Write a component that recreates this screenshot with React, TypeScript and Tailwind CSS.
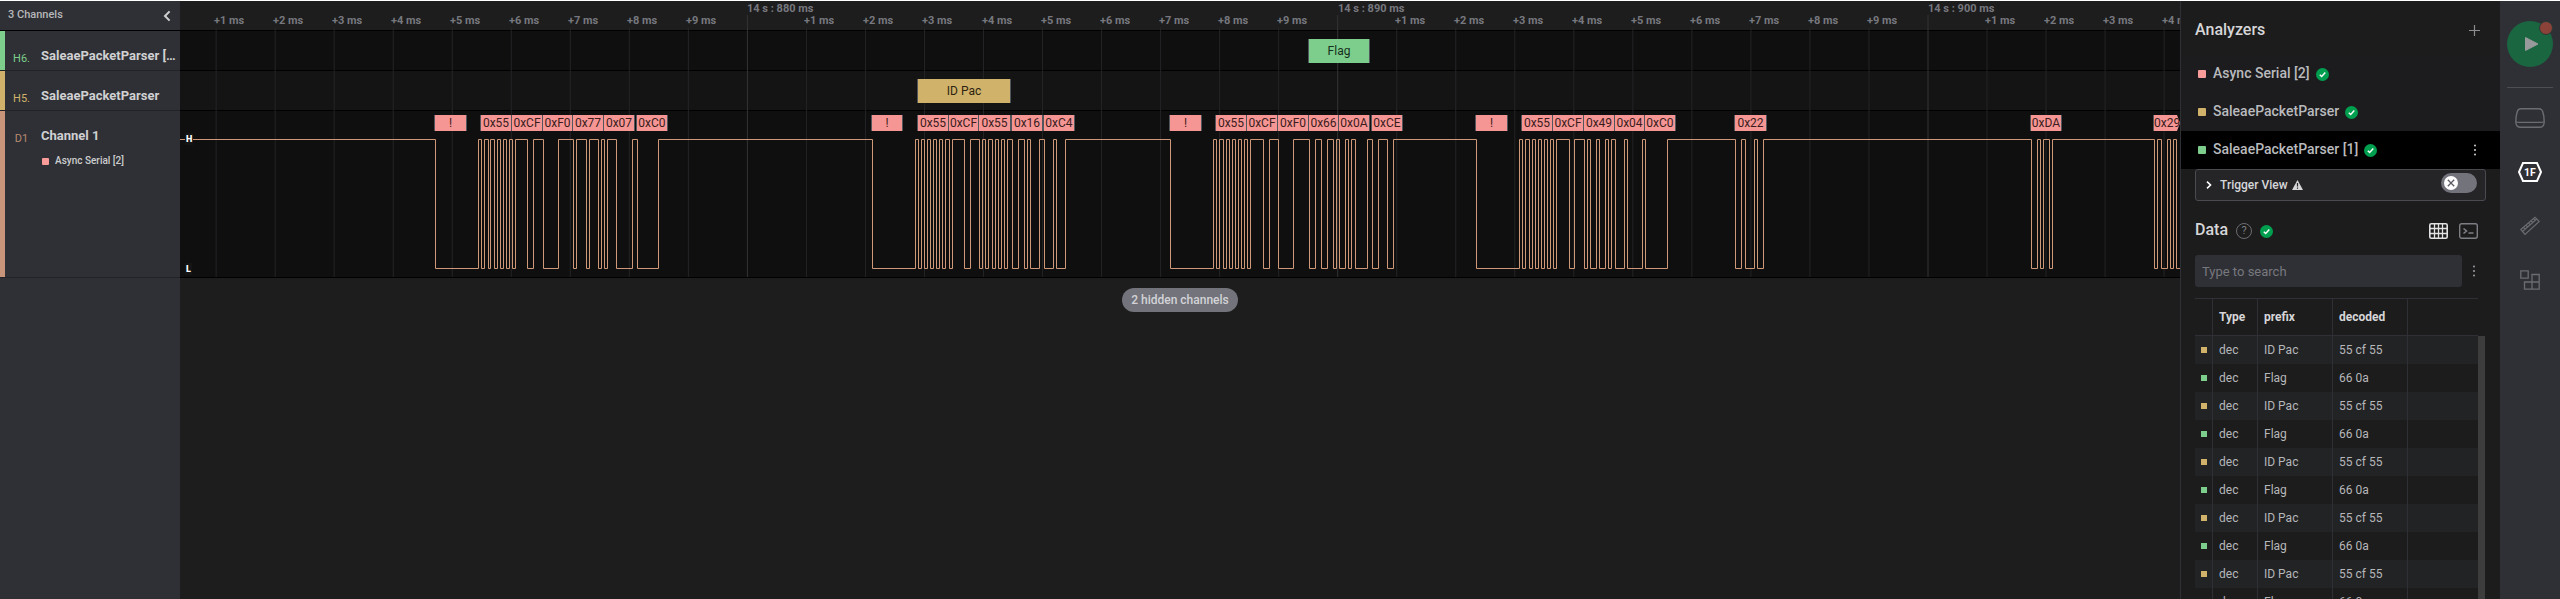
import React from "react";

const TICK_STEP = 59.03;
const TICK_ORIGIN = 567.4;
const TRACK_START = 180;
const HIGH_Y = 28.5;
const LOW_Y = 157.5;

type Bubble = { from: number; to: number; text: string };

const serialBubbles: Bubble[] = [
  { from: 434, to: 467, text: "!" },
  { from: 480, to: 512, text: "0x55" },
  { from: 511, to: 543, text: "0xCF" },
  { from: 542, to: 573, text: "0xF0" },
  { from: 572, to: 604, text: "0x77" },
  { from: 603, to: 635, text: "0x07" },
  { from: 636, to: 668, text: "0xC0" },
  { from: 871, to: 903, text: "!" },
  { from: 917, to: 949, text: "0x55" },
  { from: 948, to: 979, text: "0xCF" },
  { from: 978, to: 1011, text: "0x55" },
  { from: 1011, to: 1043, text: "0x16" },
  { from: 1043, to: 1075, text: "0xC4" },
  { from: 1169, to: 1202, text: "!" },
  { from: 1215, to: 1247, text: "0x55" },
  { from: 1246, to: 1278, text: "0xCF" },
  { from: 1277, to: 1309, text: "0xF0" },
  { from: 1308, to: 1339, text: "0x66" },
  { from: 1338, to: 1370, text: "0x0A" },
  { from: 1371, to: 1403, text: "0xCE" },
  { from: 1475, to: 1508, text: "!" },
  { from: 1521, to: 1553, text: "0x55" },
  { from: 1552, to: 1584, text: "0xCF" },
  { from: 1583, to: 1615, text: "0x49" },
  { from: 1614, to: 1645, text: "0x04" },
  { from: 1644, to: 1676, text: "0xC0" },
  { from: 1734, to: 1767, text: "0x22" },
  { from: 2030, to: 2062, text: "0xDA" },
];

// Times of every level change, starting with a fall from the idle-high level.
const edges = [
  435, 478, 481, 484, 488, 490, 494, 497, 500, 503, 506, 509, 512, 515, 527, 533, 543, 558, 573, 576,
  586, 589, 598, 601, 604, 607, 616, 632, 637, 658, 872, 915, 918, 921, 924, 927, 930, 933, 936, 939,
  942, 945, 949, 952, 964, 970, 979, 982, 985, 988, 992, 995, 998, 1001, 1004, 1007, 1012, 1018, 1024,
  1027, 1030, 1039, 1044, 1053, 1056, 1065, 1170, 1213, 1216, 1219, 1223, 1226, 1229, 1232, 1235, 1238,
  1241, 1244, 1247, 1250, 1263, 1269, 1278, 1293, 1309, 1315, 1321, 1327, 1333, 1336, 1339, 1345, 1348,
  1351, 1355, 1367, 1372, 1378, 1387, 1393, 1476, 1519, 1522, 1525, 1529, 1532, 1535, 1538, 1541, 1544,
  1547, 1550, 1553, 1556, 1569, 1574, 1584, 1587, 1590, 1596, 1599, 1605, 1608, 1611, 1615, 1624, 1627,
  1642, 1645, 1667, 1735, 1741, 1745, 1754, 1757, 1763, 2031, 2037, 2040, 2043, 2049, 2052, 2154, 2157,
  2161, 2167, 2170, 2173, 2176,
];

const tracePath =
  `M0 ${HIGH_Y}` +
  edges.map((x, i) => `H${x - TRACK_START + 0.5}V${i % 2 === 0 ? LOW_Y : HIGH_Y}`).join("") +
  "H2000";

const ticks = Array.from({ length: 34 }, (_, i) => {
  const n = i - 9;
  return {
    x: TICK_ORIGIN + n * TICK_STEP,
    major: n % 10 === 0,
    label: n % 10 === 0 ? `14 s : ${880 + n} ms` : `+${(n + 10) % 10} ms`,
  };
});

const swatches = {
  pink: "bg-[#f99b98]",
  gold: "bg-[#d0b26a]",
  green: "bg-[#7dcd8c]",
};

function CheckBadge() {
  return (
    <svg className="size-[13px] shrink-0" viewBox="0 0 13 13" aria-hidden="true">
      <circle cx="6.5" cy="6.5" r="6.5" fill="#009e4f" />
      <path d="M3.8 6.7 5.7 8.5 9.3 4.6" fill="none" stroke="#fff" strokeWidth="1.5" />
    </svg>
  );
}

function Kebab() {
  return (
    <svg className="h-3 w-1" viewBox="0 0 4 12" fill="currentColor" aria-hidden="true">
      <circle cx="2" cy="1.5" r="1" />
      <circle cx="2" cy="6" r="1" />
      <circle cx="2" cy="10.5" r="1" />
    </svg>
  );
}

function ChannelRow(props: {
  id: string;
  name: string;
  height: string;
  strip: string;
  idColor: string;
  children?: React.ReactNode;
}) {
  return (
    <li className={`flex border-b border-[#222327] ${props.height}`}>
      <div className={`w-[5px] shrink-0 ${props.strip}`} />
      <div className={`w-8 shrink-0 pt-5 pl-px text-center text-[11px] leading-4 ${props.idColor}`}>{props.id}</div>
      <div className="min-w-0 flex-1 pt-4 pr-1 pl-1">
        <div className="truncate text-[13px] leading-[18px] font-bold text-[#d0d0d2]">{props.name}</div>
        {props.children}
      </div>
    </li>
  );
}

function Channels() {
  return (
    <aside className="w-[180px] shrink-0 bg-[#2f3035]">
      <div className="flex h-[30px] items-center justify-between border-b border-black pr-[5px] pl-2">
        <h2 className="text-[11px] font-medium text-[#b6b7ba]">3 Channels</h2>
        <button type="button" aria-label="Collapse channels" className="flex size-4 items-center justify-center text-[#d0d0d2]">
          <svg className="h-3 w-2" viewBox="0 0 8 12" aria-hidden="true">
            <path d="M6.6 1.4 2 6l4.600 4.600" fill="none" stroke="currentColor" strokeWidth="2" />
          </svg>
        </button>
      </div>
      <ul>
        <ChannelRow id="H6." name="SaleaePacketParser [1]" height="h-10" strip="bg-[#7dcd8c]" idColor="text-[#7dcd8c]" />
        <ChannelRow id="H5." name="SaleaePacketParser" height="h-10" strip="bg-[#d0b26a]" idColor="text-[#d0b26a]" />
        <ChannelRow id="D1" name="Channel 1" height="h-[167px]" strip="bg-[#c8957a]" idColor="text-[#b98970]">
          <div className="flex items-center gap-1.5 pt-2 pl-px">
            <span className="size-[7px] rounded-[1px] bg-[#f99b98]" />
            <span className="text-[10px] leading-4 font-medium text-[#cdcdcf]">Async Serial [2]</span>
          </div>
        </ChannelRow>
      </ul>
    </aside>
  );
}

function BubbleBox({ bubble, tone }: { bubble: Bubble; tone: string }) {
  return (
    <div
      className={`absolute flex items-center justify-center border-x border-[#50565b] text-[12px] ${tone}`}
      style={{ left: bubble.from - TRACK_START, width: bubble.to - bubble.from }}
    >
      {bubble.text}
    </div>
  );
}

function Timeline() {
  return (
    <main className="relative min-w-0 flex-1 overflow-hidden bg-[#1d1d1d]">
      <div className="h-[30px] border-b border-black" />
      <div className="h-10 border-b border-black bg-[#0f0f0f]" />
      <div className="h-10 border-b border-black bg-[#141414]" />
      <div className="h-[167px] border-b border-black bg-[#0f0f0f]" />

      <svg className="absolute top-0 left-0 h-[276px] w-[2000px]" aria-hidden="true">
        {ticks.map((t) => (
          <line key={t.x} x1={t.x} x2={t.x} y1={t.major ? 14 : 26} y2="276" stroke={t.major ? "#343436" : "#242427"} />
        ))}
      </svg>
      {ticks.map((t) => (
        <span
          key={t.x}
          className={`absolute text-[11px] leading-3 font-bold whitespace-nowrap text-[#77787f] ${t.major ? "top-0.5" : "top-3.5 -ml-0.5"}`}
          style={{ left: Math.round(t.x) }}
        >
          {t.label}
        </span>
      ))}

      <div className="absolute inset-x-0 top-[38px] h-6">
        <BubbleBox bubble={{ from: 1308, to: 1370, text: "Flag" }} tone="h-6 bg-[#7dcd8c] text-[#15301b]" />
      </div>
      <div className="absolute inset-x-0 top-[78px] h-6">
        <BubbleBox bubble={{ from: 917, to: 1011, text: "ID Pac" }} tone="h-6 bg-[#d0b26a] text-[#2c2410]" />
      </div>
      <div className="absolute inset-x-0 top-[114px] h-4">
        {serialBubbles.map((b) => (
          <BubbleBox key={b.from} bubble={b} tone="h-4 bg-[#f69694] text-[#3a1c1c]" />
        ))}
        <div className="absolute left-[1973px] h-4 w-[27px] overflow-hidden border-l border-[#50565b] bg-[#f69694] text-[12px] leading-4 text-[#3a1c1c] [clip-path:polygon(0_0,24px_0,100%_50%,24px_100%,0_100%)]">
          0x29
        </div>
      </div>

      <svg className="absolute top-[110px] left-0 h-[166px] w-[2000px]" aria-hidden="true">
        <path d={tracePath} fill="none" stroke="#cf9879" />
      </svg>
      <span className="absolute top-[132px] left-[5px] bg-[#151515] px-px text-[9px] leading-3 font-black text-white">H</span>
      <span className="absolute top-[262px] left-[5px] bg-[#151515] px-px text-[9px] leading-3 font-black text-white">L</span>

      <div className="flex justify-center pt-2.5">
        <button type="button" className="h-6 rounded-full bg-[#72737b] px-[9px] text-[12px] font-medium text-[#d3d3d7]">
          2 hidden channels
        </button>
      </div>
    </main>
  );
}

const analyzers = [
  { name: "Async Serial [2]", tone: swatches.pink, active: false },
  { name: "SaleaePacketParser", tone: swatches.gold, active: false },
  { name: "SaleaePacketParser [1]", tone: swatches.green, active: true },
];

const rows = Array.from({ length: 10 }, (_, i) =>
  i % 2 === 0
    ? { tone: swatches.gold, type: "dec", prefix: "ID Pac", decoded: "55 cf 55" }
    : { tone: swatches.green, type: "dec", prefix: "Flag", decoded: "66 0a" },
);

function DataTable() {
  return (
    <div className="mt-[11px] ml-3.5 flex w-[291px]">
      <table className="w-[283px] table-fixed border-separate border-spacing-0 text-left text-[12px]">
        <colgroup>
          <col className="w-[18px]" />
          <col className="w-[45px]" />
          <col className="w-[75px]" />
          <col className="w-[75px]" />
          <col />
        </colgroup>
        <thead>
          <tr className="h-[38px] text-[#d6d6d8]">
            <th className="border-y border-r border-[#2f3035] p-0" aria-label="Color" />
            <th className="border-y border-r border-[#2f3035] p-0 pl-1.5 font-bold">Type</th>
            <th className="border-y border-r border-[#2f3035] p-0 pl-1.5 font-bold">prefix</th>
            <th className="border-y border-r border-[#2f3035] p-0 pl-1.5 font-bold">decoded</th>
            <th className="border-y border-[#2f3035] p-0" aria-label="Extra" />
          </tr>
        </thead>
        <tbody>
          {rows.map((r, i) => (
            <tr key={i} className="h-7 text-[#b6b7ba] odd:bg-[#222325]">
              <td className="border-r border-[#2f3035] p-0">
                <span className={`ml-1.5 block size-1.5 ${r.tone}`} />
              </td>
              <td className="border-r border-[#2f3035] p-0 pl-1.5">{r.type}</td>
              <td className="border-r border-[#2f3035] p-0 pl-1.5">{r.prefix}</td>
              <td className="border-r border-[#2f3035] p-0 pl-1.5">{r.decoded}</td>
              <td className="p-0" />
            </tr>
          ))}
        </tbody>
      </table>
      <div className="mt-[38px] w-[7px] bg-[#3d3d3d]" />
    </div>
  );
}

function AnalyzerPanel() {
  return (
    <section className="flex w-80 shrink-0 flex-col overflow-hidden border-l border-[#2f3035] bg-[#1c1c1c]">
      <header className="flex h-[54px] shrink-0 items-center justify-between pt-1 pr-5 pl-3.5">
        <h2 className="text-[16px] font-medium text-[#d6d6d8]">Analyzers</h2>
        <button type="button" aria-label="Add analyzer" className="text-[#8c8c91]">
          <svg className="size-[11px]" viewBox="0 0 11 11" aria-hidden="true">
            <path d="M5.500 0V11M0 5.500H11" stroke="currentColor" strokeWidth="1.200" />
          </svg>
        </button>
      </header>
      <ul className="shrink-0 bg-[#1c1c1e]">
        {analyzers.map((a) => (
          <li key={a.name} className={`flex h-[38px] items-center pr-[23px] pl-[17px] ${a.active ? "bg-black" : ""}`}>
            <span className={`mr-[7px] size-2 rounded-[1px] ${a.tone}`} />
            <button type="button" className="mr-1.5 pb-0.5 text-[14px] leading-5 font-medium text-[#b9babd]">
              {a.name}
            </button>
            <CheckBadge />
            {a.active && (
              <button type="button" aria-label="Analyzer options" className="ml-auto text-[#d0d0d2]">
                <Kebab />
              </button>
            )}
          </li>
        ))}
      </ul>
      <div className="mr-3.5 ml-3.5 flex h-8 shrink-0 items-center rounded-[3px] border border-[#4a4b50] bg-[#252528] pr-2 pl-2.5">
        <button type="button" className="flex items-center text-[12px] font-medium text-[#d6d6d8]">
          <svg className="mr-2 h-2 w-1.5" viewBox="0 0 6 8" aria-hidden="true">
            <path d="M1 .7 4.500 4 1 7.300" fill="none" stroke="#fff" strokeWidth="1.600" />
          </svg>
          Trigger View
          <svg className="ml-1 h-[10px] w-[11px]" viewBox="0 0 11 10" aria-hidden="true">
            <path d="M5.500 0 11 10H0Z" fill="#d6d6d8" />
            <path d="M5.500 3V6.500M5.500 7.400V8.700" stroke="#252528" strokeWidth="1.200" />
          </svg>
        </button>
        <label className="relative mb-1 ml-auto flex h-5 w-9 items-center rounded-full bg-[#72737b] pl-[3px]">
          <input type="checkbox" role="switch" aria-label="Trigger View" className="absolute inset-0 opacity-0" />
          <svg className="size-3.5" viewBox="0 0 14 14" aria-hidden="true">
            <circle cx="7" cy="7" r="7" fill="#fff" />
            <path d="M3.800 3.800 10.200 10.200M10.200 3.800 3.800 10.200" stroke="#5b5c63" strokeWidth="1.300" />
          </svg>
        </label>
      </div>
      <div className="mt-5 flex h-5 shrink-0 items-center pr-[22px] pl-3.5">
        <h2 className="pb-0.5 text-[16px] leading-5 font-medium text-[#d6d6d8]">Data</h2>
        <button
          type="button"
          aria-label="Help"
          className="ml-2 flex size-4 items-center justify-center rounded-full border border-[#6b6c72] text-[11px] leading-4 text-[#7d7e84]"
        >
          ?
        </button>
        <span className="ml-2">
          <CheckBadge />
        </span>
        <button type="button" aria-label="Table view" className="ml-auto text-[#e2e2e4]">
          <svg className="h-4 w-[19px]" viewBox="0 0 19 16" fill="none" stroke="currentColor" aria-hidden="true">
            <rect x=".8" y=".8" width="17.400" height="14.400" rx="1.500" strokeWidth="1.600" />
            <path d="M5.500 1V15M9.500 1V15M13.500 1V15M1 5.500H18M1 10.500H18" strokeWidth="1.300" />
          </svg>
        </button>
        <button type="button" aria-label="Terminal view" className="ml-[11px] text-[#7d7e84]">
          <svg className="h-4 w-[19px]" viewBox="0 0 19 16" fill="none" stroke="currentColor" aria-hidden="true">
            <rect x=".7" y=".7" width="17.600" height="14.600" rx="2" strokeWidth="1.400" />
            <path d="M4.500 5.500 7.500 8 4.500 10.500M9.500 10H14.500" strokeWidth="1.600" />
          </svg>
        </button>
      </div>
      <div className="mt-3.5 flex h-8 shrink-0 items-center pr-6 pl-3.5">
        <input
          type="text"
          aria-label="Search data"
          placeholder="Type to search"
          className="h-8 min-w-0 flex-1 rounded-[3px] bg-[#2f3035] px-[7px] text-[13px] text-[#d6d6d8] placeholder:text-[#77787f]"
        />
        <button type="button" aria-label="Data options" className="ml-2.5 text-[#a0a0a4]">
          <Kebab />
        </button>
      </div>
      <DataTable />
    </section>
  );
}

function Rail() {
  return (
    <nav className="flex w-[60px] shrink-0 flex-col items-center bg-[#2f3035] pt-5 text-[#6b6c72]">
      <button type="button" aria-label="Start capture" className="relative size-[46px] rounded-full bg-[#196641]">
        <svg className="size-[46px]" viewBox="0 0 46 46" aria-hidden="true">
          <path d="M18.500 16.500V29.500L31 23Z" fill="#97999a" stroke="#97999a" strokeLinejoin="round" />
        </svg>
        <span className="absolute top-0 right-0 size-3.5 rounded-full border border-[#2b3a37] bg-[#8b4238]" />
      </button>
      <hr className="mt-5 w-[46px] border-[#4d4e53]" />
      <button type="button" aria-label="Device" className="mt-5">
        <svg className="h-5 w-[30px]" viewBox="0 0 30 20" fill="none" stroke="currentColor" strokeWidth="1.400" aria-hidden="true">
          <path d="M6 .8H24Q26.800 .8 27.700 3.500Q29.200 8 29.200 13.500Q29.200 19.200 25 19.200H5Q.8 19.200 .8 13.500Q.8 8 2.300 3.500Q3.200 .8 6 .8Z" />
          <path d="M1 13.700Q2 14.400 4 14.400H26Q28 14.400 29 13.700" />
        </svg>
      </button>
      <button type="button" aria-label="Analyzers" className="mt-[34px] text-white">
        <svg className="h-5 w-6" viewBox="0 0 24 20" aria-hidden="true">
          <path d="M5 1H19L23 10 19 19H5L1 10Z" fill="none" stroke="currentColor" strokeWidth="2" />
          <text x="12" y="13.800" textAnchor="middle" fontSize="10.500" fontWeight="700" fill="currentColor">
            1F
          </text>
        </svg>
      </button>
      <button type="button" aria-label="Measurements" className="mt-[34px]">
        <svg className="size-5" viewBox="0 0 20 20" fill="none" stroke="currentColor" strokeWidth="1.200" aria-hidden="true">
          <path d="M.8 13.500 15 1.200 19.200 5.500 5 18.500Z" />
          <path d="M3.500 11.500 5 13M6 9.300 7.500 10.800M8.500 7.100 10 8.600M11 4.900 12.500 6.400M13.500 2.700 15 4.200M2.500 15.500 16.700 3" />
        </svg>
      </button>
      <button type="button" aria-label="Extensions" className="mt-[34px]">
        <svg className="size-5" viewBox="0 0 20 20" fill="none" stroke="currentColor" strokeWidth="1.300" aria-hidden="true">
          <path d="M.8 .8H8.200V8.200H.8ZM12 4.500H19.200V12H12ZM4.500 12H12V19.200H4.500ZM12 12H19.200V19.200H12Z" />
        </svg>
      </button>
    </nav>
  );
}

export default function App() {
  return (
    <div className="flex h-screen overflow-hidden border-t border-white bg-[#1d1d1d] font-['Roboto',sans-serif]">
      <Channels />
      <Timeline />
      <AnalyzerPanel />
      <Rail />
    </div>
  );
}
